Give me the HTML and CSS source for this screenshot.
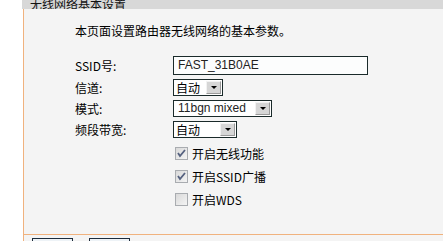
FILE: index.html
```html
<!DOCTYPE html>
<html>
<head>
<meta charset="utf-8">
<link rel="stylesheet" href="styles.css">
</head>
<body>
<div class="wrap">
  <div class="title"><span>无线网络基本设置</span></div>
  <div class="panel">
    <p class="intro">本页面设置路由器无线网络的基本参数。</p>
    <div class="form">
      <div class="label">SSID号:</div>
      <div class="ctrl"><span class="input">FAST_31B0AE</span></div>
      <div class="label">信道:</div>
      <div class="ctrl"><span class="select s1"><span class="val">自动</span><span class="btn"><i></i></span></span></div>
      <div class="label">模式:</div>
      <div class="ctrl"><span class="select s2"><span class="val latin">11bgn mixed</span><span class="btn"><i></i></span></span></div>
      <div class="label">频段带宽:</div>
      <div class="ctrl"><span class="select s3"><span class="val">自动</span><span class="btn"><i></i></span></span></div>
    </div>
    <div class="checks">
      <div class="check"><span class="box on"><svg width="11" height="11" viewBox="0 0 11 11"><path d="M2 5 L4 8 L9 2" fill="none" stroke="#55617f" stroke-width="1.8"/></svg></span><span>开启无线功能</span></div>
      <div class="check"><span class="box on"><svg width="11" height="11" viewBox="0 0 11 11"><path d="M2 5 L4 8 L9 2" fill="none" stroke="#55617f" stroke-width="1.8"/></svg></span><span>开启SSID广播</span></div>
      <div class="check"><span class="box"></span><span>开启WDS</span></div>
    </div>
  </div>
  <div class="buttons">
    <span class="button"></span>
    <span class="button"></span>
  </div>
</div>
</body>
</html>
```

FILE: styles.css
```css
html, body {
  margin: 0;
  padding: 0;
  background: #ffffff;
  font-family: "Noto Sans CJK SC", "Noto Sans", sans-serif;
  font-size: 12px;
  color: #000;
}
.wrap {
  margin-left: 22px;
  overflow: hidden;
  height: 241px;
}
.title {
  height: 9px;
  background: #d8d8d8;
  overflow: hidden;
  display: flex;
  align-items: flex-end;
  padding-left: 8px;
}
.title span {
  display: block;
  line-height: 14px;
  height: 14px;
  flex: none;
  margin-bottom: -2px;
  color: #111;
}
.panel {
  margin-left: 1px;
  border-left: 1px solid #f0b27e;
  border-bottom: 1px solid #f0b27e;
  background: #f4f4f4;
  height: 225px;
  padding-left: 51px;
  box-sizing: content-box;
}
.intro {
  margin: 0;
  padding-top: 14px;
  line-height: 16px;
  height: 16px;
}
.form {
  margin-top: 17px;
  display: grid;
  grid-template-columns: 98px auto;
  row-gap: 4px;
  align-items: center;
}
.label {
  line-height: 16px;
}
.ctrl {
  display: flex;
}
.input {
  box-sizing: border-box;
  width: 195px;
  height: 19px;
  border: 1px solid #1a2a2a;
  background: #fcfdfd;
  font-family: "Liberation Sans", Arial, sans-serif;
  font-size: 12px;
  line-height: 17px;
  padding-left: 4px;
  color: #222;
}
.select {
  box-sizing: border-box;
  height: 17px;
  border: 1px solid #1a2a2a;
  background: #fff;
  display: flex;
  align-items: center;
  justify-content: space-between;
}
.s1 { width: 50px; }
.s2 { width: 99px; }
.s3 { width: 64px; }
.val {
  padding-left: 2px;
  line-height: 15px;
}
.latin {
  font-family: "Liberation Sans", Arial, sans-serif;
  padding-left: 4px;
  color: #222;
}
.btn {
  box-sizing: border-box;
  width: 15px;
  height: 13px;
  margin-right: 1px;
  background: #d6d6d6;
  border-top: 1px solid #f2f2f2;
  border-left: 1px solid #f2f2f2;
  border-right: 1px solid #9a9a9a;
  border-bottom: 1px solid #9a9a9a;
  display: flex;
  align-items: center;
  justify-content: center;
}
.btn i {
  width: 0;
  height: 0;
  border-left: 3px solid transparent;
  border-right: 3px solid transparent;
  border-top: 3px solid #000;
}
.checks {
  margin-top: 4px;
  margin-left: 100px;
  display: flex;
  flex-direction: column;
}
.check {
  height: 23px;
  display: flex;
  align-items: center;
}
.box {
  box-sizing: border-box;
  width: 13px;
  height: 13px;
  border: 1px solid #a9acb0;
  background: linear-gradient(135deg, #d9d9d9, #f4f4f4);
  margin-right: 4px;
  display: flex;
  align-items: center;
  justify-content: center;
}
.buttons {
  margin-left: 1px;
  border-left: 1px solid #f0b27e;
  background: #f4f4f4;
  padding-left: 8px;
  padding-top: 3px;
  display: flex;
  gap: 16px;
  height: 20px;
}
.button {
  box-sizing: border-box;
  width: 41px;
  height: 20px;
  border: 1px solid #1c2b3b;
  background: #eef3f7;
}
```
